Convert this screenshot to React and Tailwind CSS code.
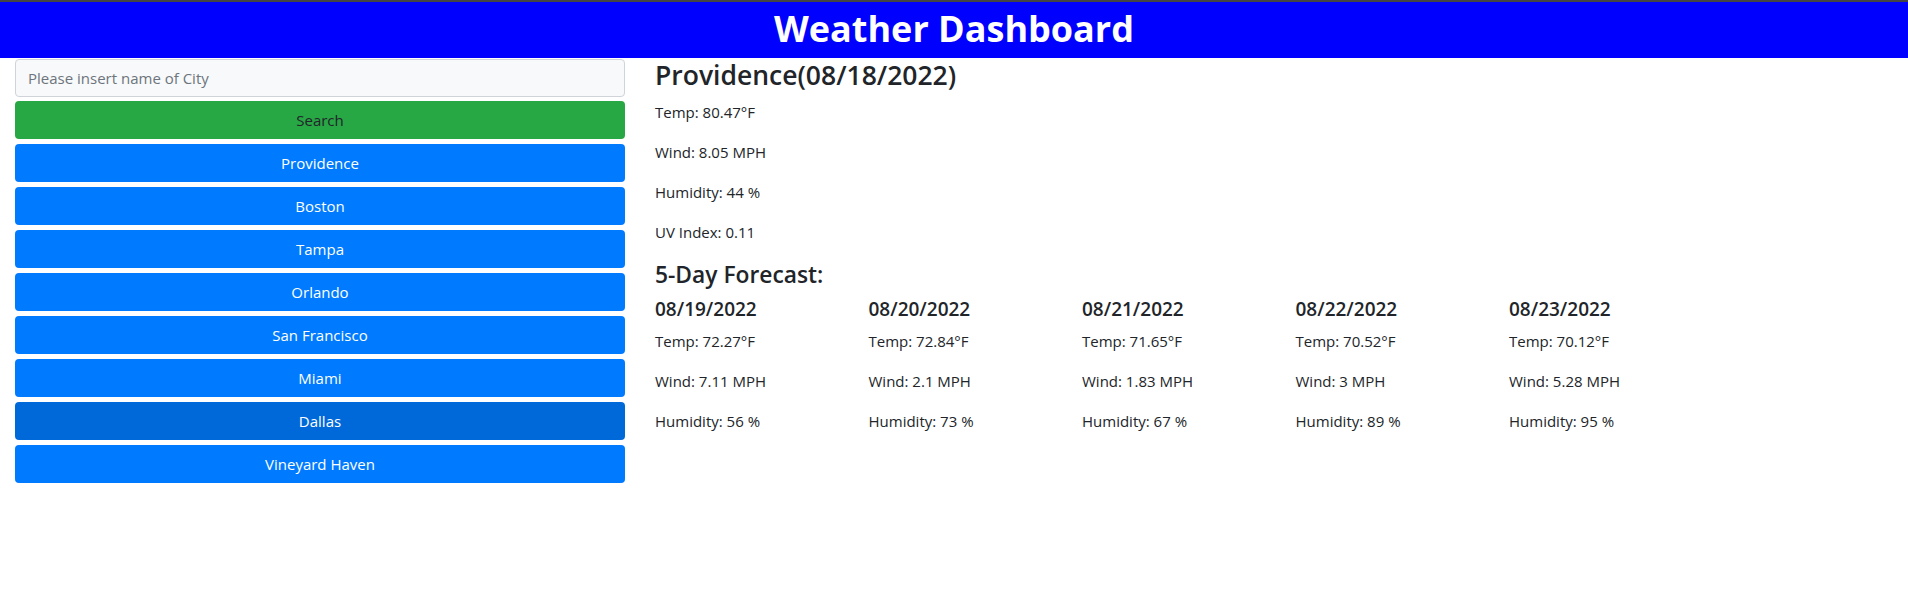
const cities = [
  'Providence',
  'Boston',
  'Tampa',
  'Orlando',
  'San Francisco',
  'Miami',
  'Dallas',
  'Vineyard Haven',
];

const forecast = [
  { date: '08/19/2022', temp: '72.27', wind: '7.11', humidity: '56' },
  { date: '08/20/2022', temp: '72.84', wind: '2.1', humidity: '73' },
  { date: '08/21/2022', temp: '71.65', wind: '1.83', humidity: '67' },
  { date: '08/22/2022', temp: '70.52', wind: '3', humidity: '89' },
  { date: '08/23/2022', temp: '70.12', wind: '5.28', humidity: '95' },
];

export default function App() {
  return (
    <div className="min-h-[594px] bg-white text-[#212529] font-['Open_Sans',_'Noto_Sans',_sans-serif]">
      <div className="h-[2px] bg-[#444]" />
      <header className="h-[56px] bg-[#0000ff] flex items-center justify-center pb-[3px]">
        <h1 className="text-white text-[36px] font-bold leading-none">Weather Dashboard</h1>
      </header>

      <div className="flex">
        <aside className="w-[640px] px-[15px] pt-[1px]">
          <input
            type="text"
            placeholder="Please insert name of City"
            className="w-full h-[38px] px-3 rounded-[4px] border border-[#ced4da] bg-[#f8f9fa] text-[15px] placeholder:text-[#6c757d] outline-none"
          />
          <button className="mt-[4px] w-full h-[38px] rounded-[4px] bg-[#28a745] text-[15px] text-[#212529]">
            Search
          </button>
          {cities.map((city) => (
            <button
              key={city}
              className={`mt-[5px] w-full h-[38px] rounded-[4px] text-[15px] text-white block ${
                city === 'Dallas' ? 'bg-[#0069d9]' : 'bg-[#007bff]'
              }`}
            >
              {city}
            </button>
          ))}
        </aside>

        <main className="flex-1 px-[15px]">
          <h3 className="text-[26.5px] font-semibold leading-[34px] mb-2">Providence(08/18/2022)</h3>
          <p className="text-[15px] leading-6 mb-4">Temp: 80.47°F</p>
          <p className="text-[15px] leading-6 mb-4">Wind: 8.05 MPH</p>
          <p className="text-[15px] leading-6 mb-4">Humidity: 44 %</p>
          <p className="text-[15px] leading-6 mb-4">UV Index: 0.11</p>

          <h4 className="text-[22.8px] font-semibold leading-[29px] mb-2">5-Day Forecast:</h4>
          <div className="flex">
            {forecast.map((day) => (
              <div key={day.date} className="w-[213.5px]">
                <h5 className="text-[19px] font-semibold leading-6 mb-2">{day.date}</h5>
                <p className="text-[15px] leading-6 mb-4">Temp: {day.temp}°F</p>
                <p className="text-[15px] leading-6 mb-4">Wind: {day.wind} MPH</p>
                <p className="text-[15px] leading-6 mb-4">Humidity: {day.humidity} %</p>
              </div>
            ))}
          </div>
        </main>
      </div>
    </div>
  );
}
